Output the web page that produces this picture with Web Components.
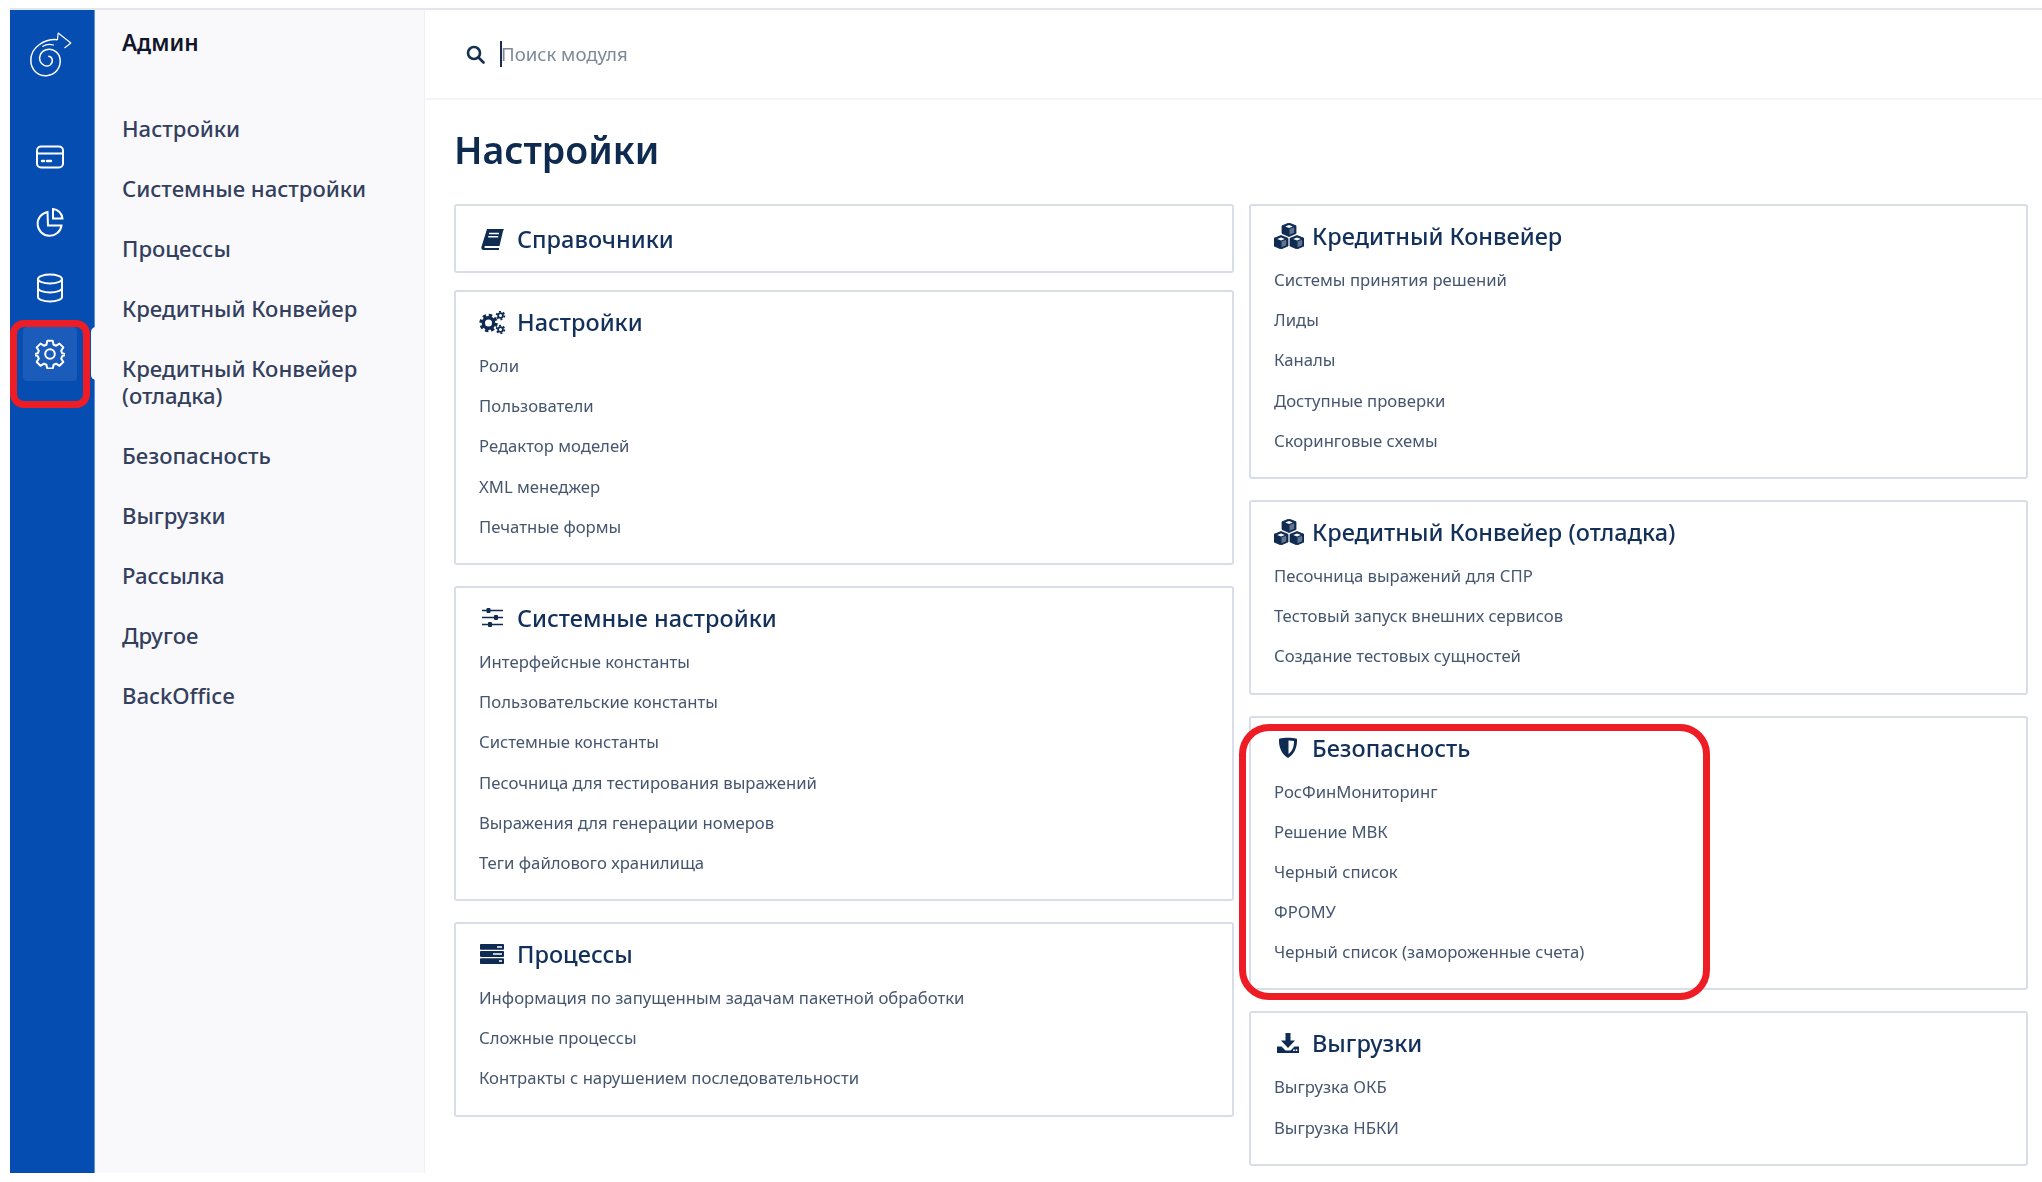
<!DOCTYPE html>
<html lang="ru">
<head>
<meta charset="utf-8">
<title>Настройки</title>
<style>
  html, body { margin: 0; padding: 0; background: #fff; }
  body { font-family: "Noto Sans", "Liberation Sans", sans-serif; }
</style>
</head>
<body>
<app-shell>
  <rail-nav slot="rail">
    <rail-icon name="card"></rail-icon>
    <rail-icon name="pie"></rail-icon>
    <rail-icon name="db"></rail-icon>
    <rail-icon name="gear" active></rail-icon>
  </rail-nav>
  <sub-menu slot="menu" heading="Админ">
    <sub-item>Настройки</sub-item>
    <sub-item>Системные настройки</sub-item>
    <sub-item>Процессы</sub-item>
    <sub-item>Кредитный Конвейер</sub-item>
    <sub-item>Кредитный Конвейер (отладка)</sub-item>
    <sub-item>Безопасность</sub-item>
    <sub-item>Выгрузки</sub-item>
    <sub-item>Рассылка</sub-item>
    <sub-item>Другое</sub-item>
    <sub-item>BackOffice</sub-item>
  </sub-menu>
  <search-bar slot="search" placeholder="Поиск модуля"></search-bar>
  <settings-page slot="page" heading="Настройки">
    <module-card slot="left" heading="Справочники" icon="book" compact></module-card>
    <module-card slot="left" heading="Настройки" icon="cogs">
      <module-link>Роли</module-link>
      <module-link>Пользователи</module-link>
      <module-link>Редактор моделей</module-link>
      <module-link>XML менеджер</module-link>
      <module-link>Печатные формы</module-link>
    </module-card>
    <module-card slot="left" heading="Системные настройки" icon="sliders">
      <module-link>Интерфейсные константы</module-link>
      <module-link>Пользовательские константы</module-link>
      <module-link>Системные константы</module-link>
      <module-link>Песочница для тестирования выражений</module-link>
      <module-link>Выражения для генерации номеров</module-link>
      <module-link>Теги файлового хранилища</module-link>
    </module-card>
    <module-card slot="left" heading="Процессы" icon="server">
      <module-link>Информация по запущенным задачам пакетной обработки</module-link>
      <module-link>Сложные процессы</module-link>
      <module-link>Контракты с нарушением последовательности</module-link>
    </module-card>

    <module-card slot="right" heading="Кредитный Конвейер" icon="cubes">
      <module-link>Системы принятия решений</module-link>
      <module-link>Лиды</module-link>
      <module-link>Каналы</module-link>
      <module-link>Доступные проверки</module-link>
      <module-link>Скоринговые схемы</module-link>
    </module-card>
    <module-card slot="right" heading="Кредитный Конвейер (отладка)" icon="cubes">
      <module-link>Песочница выражений для СПР</module-link>
      <module-link>Тестовый запуск внешних сервисов</module-link>
      <module-link>Создание тестовых сущностей</module-link>
    </module-card>
    <module-card slot="right" heading="Безопасность" icon="shield">
      <module-link>РосФинМониторинг</module-link>
      <module-link>Решение МВК</module-link>
      <module-link>Черный список</module-link>
      <module-link>ФРОМУ</module-link>
      <module-link>Черный список (замороженные счета)</module-link>
    </module-card>
    <module-card slot="right" heading="Выгрузки" icon="download">
      <module-link>Выгрузка ОКБ</module-link>
      <module-link>Выгрузка НБКИ</module-link>
    </module-card>
  </settings-page>
  <red-frame style="left:10px;top:320px;width:80px;height:88px" radius="14"></red-frame>
  <red-frame style="left:1239px;top:724px;width:471px;height:276px" radius="30"></red-frame>
</app-shell>

<script>
// Иконки бокового меню (контурные) и карточек (заливка)
const RAIL_ICONS = {
  card: `<rect x="2" y="4.5" width="26" height="21" rx="4"/><path d="M2 11.5h26"/><path d="M7 19h2M12 19h4" stroke-width="2.4"/>`,
  pie: `<g transform="translate(0 -1.500)"><path d="M12.5 5.5A12 12 0 1 0 26.5 19H13z" /><path d="M18 2.5c5 .4 9 4.300 9.500 9.500H18z"/></g>`,
  db: `<ellipse cx="15" cy="6" rx="12" ry="4.500"/><path d="M3 6v18c0 2.500 5.400 4.500 12 4.500s12-2 12-4.500V6"/><path d="M3 15c0 2.500 5.400 4.500 12 4.500s12-2 12-4.500"/>`,
  gear: `<path d="M12.300 1.800h5.400l.9 3.900 2.500 1 3.400-2.100 3.800 3.800-2.100 3.400 1 2.500 3.900.9v.6l-3.900 1.300-1 2.500 2.100 3.400-3.800 3.800-3.400-2.100-2.500 1-.9 3.900h-5.400l-.9-3.900-2.500-1-3.400 2.100-3.800-3.800 2.100-3.400-1-2.500-3.900-1.300v-.6l3.900-.9 1-2.500-2.100-3.400 3.800-3.800 3.400 2.100 2.500-1z" stroke-linejoin="round"/><circle cx="15" cy="15" r="4.800"/>`
};

const CUBE = (x, y) => `<g transform="translate(${x} ${y})">
  <path d="M7 0l7 2.800v7.700L7 13.500 0 10.500V2.800z" stroke="#0f2b52" stroke-width=".8" stroke-linejoin="round"/>
  <path d="M7 2l3.800 1.400L7 4.900 3.200 3.400z" fill="#fff"/>
  <path d="M7.500 6v5.700l4.700-2V4.200z" fill="#fff" opacity=".35"/>
</g>`;

const CARD_ICONS = {
  book: { w: 23, h: 21, pad: 2, svg: `<path d="M6 0h17l-1 2-3.500 15H4.500c-1.500 0-1.500 2 0 2H18v2H2.500C.8 21 0 19.500.4 18z"/><path d="M8 4.500h10M7.200 7.800h10" stroke="#fff" stroke-width="1.600"/>` },
  cogs: { w: 27, h: 23, pad: 0, svg: `
    <g fill="none" stroke="#0f2b52"><circle cx="9.500" cy="12" r="5.200" stroke-width="3.400"/><circle cx="9.500" cy="12" r="7.700" stroke-width="3" stroke-dasharray="3.400 2.650"/>
    <circle cx="21.500" cy="4.500" r="2.400" stroke-width="1.800"/><circle cx="21.500" cy="4.500" r="3.900" stroke-width="1.700" stroke-dasharray="2 2.100"/>
    <circle cx="21.500" cy="18.500" r="2.400" stroke-width="1.800"/><circle cx="21.500" cy="18.500" r="3.900" stroke-width="1.700" stroke-dasharray="2 2.100"/></g>` },
  sliders: { w: 21, h: 19, pad: 3, svg: `<path d="M0 2.500h21M0 9.500h21M0 16.500h21" stroke="#0f2b52" stroke-width="1.700"/><rect x="4.500" y="0" width="4" height="5" rx="1"/><rect x="12" y="7" width="4" height="5" rx="1"/><rect x="6" y="14" width="4" height="5" rx="1"/>` },
  server: { w: 24, h: 20, pad: 1, svg: `<rect width="24" height="5.800" rx=".8"/><rect y="7.100" width="24" height="5.800" rx=".8"/><rect y="14.200" width="24" height="5.800" rx=".8"/><path d="M17 2.900h5M13 10h9M19 17.100h3" stroke="#fff" stroke-width="1.500"/>` },
  cubes: { w: 30, h: 26, pad: 0, svg: CUBE(8, 0) + CUBE(0, 12.500) + CUBE(16, 12.500) },
  shield: { w: 18, h: 21, pad: 5, svg: `<path d="M1 1.500C4 .5 14 .5 17 1.500 18.500 2 18 3 18 4 18 12 14 18 9 21 4 18 0 12 0 4 0 3-.5 2 1 1.500z"/><path d="M9.500 3.500c2 0 4 .2 5.500.5 0 5.500-1.500 10-5.500 13z" fill="#fff"/>` },
  download: { w: 22, h: 20, pad: 3, svg: `<path d="M8.500 0h5v7.500H18l-7 7.500-7-7.500h4.500z"/><path d="M0 13.500h4.500l4 4h5l4-4H22V20H0z"/><circle cx="17" cy="17.200" r=".9" fill="#fff"/><circle cx="19.500" cy="17.200" r=".9" fill="#fff"/>` }
};

class AppShell extends HTMLElement {
  constructor() {
    super();
    this.attachShadow({ mode: 'open' }).innerHTML = `
    <style>
      :host {
        display: grid;
        position: relative;
        grid-template-columns: 85px 330px 1fr;
        grid-template-rows: 90px 1fr;
        margin: 8px 0 0 10px;
        height: 1165px;
        border-top: 2px solid #e4e6ee;
        box-sizing: border-box;
        overflow: hidden;
        filter: blur(.4px);
      }
      ::slotted([slot=rail]) { grid-row: 1 / 3; }
      ::slotted([slot=menu]) { grid-row: 1 / 3; }
    </style>
    <slot name="rail"></slot>
    <slot name="menu"></slot>
    <slot name="search"></slot>
    <slot name="page"></slot>
    <slot></slot>`;
  }
}

class RailNav extends HTMLElement {
  constructor() {
    super();
    this.attachShadow({ mode: 'open' }).innerHTML = `
    <style>
      :host {
        display: flex;
        flex-direction: column;
        background: #054db0;
        border-right: 1px solid #5a90e0;
        padding: 22px 0 0 13px;
        box-sizing: border-box;
      }
      .logo { display: block; margin: 0 0 53px 7px; }
      .list { display: flex; flex-direction: column; gap: 11.500px; }
    </style>
    <svg class="logo" width="42" height="45" viewBox="90 97 125 135" fill="none" stroke="#fff" stroke-width="4.500" stroke-linecap="round" stroke-linejoin="round">
      <path d="M170 120C135 118 92 140 92 182 92 212 115 230 140 228 165 226 182 205 180 180 178 158 158 145 138 150 122 154 115 170 120 185 125 198 140 203 150 196 160 188 158 172 146 170"/>
      <path d="M172 119L174 100 212 130 194 144" stroke-width="3.500"/>
      <path d="M128 140C138 133 150 133 160 136" stroke-width="3.500"/>
    </svg>
    <div class="list"><slot></slot></div>`;
  }
}

class RailIcon extends HTMLElement {
  constructor() {
    super();
    this.attachShadow({ mode: 'open' }).innerHTML = `
    <style>
      :host {
        display: flex;
        position: relative;
        align-items: center;
        justify-content: center;
        width: 54px;
        height: 54px;
        border-radius: 4px;
      }
      :host([active]) { background: #1b5cba; }
      svg { display: block; }
      .notch {
        display: none;
        position: absolute;
        left: 68px;
        top: 0;
        width: 5px;
        height: 53px;
        background: #f9f9fc;
        border-radius: 6px 0 0 6px;
      }
      :host([active]) .notch { display: block; }
    </style>
    <svg width="30" height="30" viewBox="0 0 30 30" fill="none" stroke="#fff" stroke-width="2" stroke-linecap="round">${RAIL_ICONS[this.getAttribute('name')]}</svg>
    <span class="notch"></span>`;
  }
}

class SubMenu extends HTMLElement {
  constructor() {
    super();
    this.attachShadow({ mode: 'open' }).innerHTML = `
    <style>
      :host {
        display: block;
        background: #f9f9fc;
        border-right: 1px solid #eef0f4;
        padding: 18px 24px 0 27px;
        box-sizing: border-box;
        font-family: "Noto Sans", "Liberation Sans", sans-serif;
      }
      h2 {
        margin: 0 0 57px;
        font-size: 22.500px;
        line-height: 30px;
        font-weight: 600;
        color: #12162a;
      }
      .list { display: flex; flex-direction: column; gap: 33px; }
    </style>
    <h2>${this.getAttribute('heading')}</h2>
    <div class="list"><slot></slot></div>`;
  }
}

class SubItem extends HTMLElement {
  constructor() {
    super();
    this.attachShadow({ mode: 'open' }).innerHTML = `
    <style>
      :host {
        display: block;
        font-size: 22.100px;
        line-height: 27px;
        font-weight: 500;
        color: #333f5c;
      }
    </style>
    <slot></slot>`;
  }
}

class SearchBar extends HTMLElement {
  constructor() {
    super();
    this.attachShadow({ mode: 'open' }).innerHTML = `
    <style>
      :host {
        display: flex;
        align-items: center;
        height: 90px;
        padding-left: 41px;
        box-sizing: border-box;
        border-bottom: 2px solid #f3f4f7;
        font-family: "Noto Sans", "Liberation Sans", sans-serif;
      }
      svg { display: block; flex: none; margin-right: 15px; }
      .caret { width: 2px; height: 26px; background: #1c2c4c; flex: none; }
      .placeholder { font-size: 18.600px; color: #7c8999; margin-left: -1px; padding-bottom: 2px; }
    </style>
    <svg width="19" height="19" viewBox="0 0 19 19" fill="none" stroke="#14304f" stroke-width="2.600"><circle cx="8" cy="8" r="6"/><path d="M12.500 12.500l5 5" stroke-linecap="round"/></svg>
    <span class="caret"></span>
    <span class="placeholder">${this.getAttribute('placeholder')}</span>`;
  }
}

class SettingsPage extends HTMLElement {
  constructor() {
    super();
    this.attachShadow({ mode: 'open' }).innerHTML = `
    <style>
      :host {
        display: block;
        padding: 22px 15px 0 29px;
        font-family: "Noto Sans", "Liberation Sans", sans-serif;
      }
      h1 {
        margin: 0 0 26px;
        font-size: 37.500px;
        line-height: 56px;
        font-weight: 600;
        color: #0e2a4f;
      }
      .cols { display: grid; grid-template-columns: 780px 779px; column-gap: 15px; align-items: start; }
      .col { display: flex; flex-direction: column; gap: 21px; }
    </style>
    <h1>${this.getAttribute('heading')}</h1>
    <div class="cols">
      <div class="col"><slot name="left"></slot></div>
      <div class="col"><slot name="right"></slot></div>
    </div>`;
  }
}

class ModuleCard extends HTMLElement {
  constructor() {
    super();
    const icon = CARD_ICONS[this.getAttribute('icon')];
    this.attachShadow({ mode: 'open' }).innerHTML = `
    <style>
      :host {
        display: block;
        border: 2px solid #d8dde8;
        border-radius: 3px;
        background: #fff;
        padding: 10px 23px 16px;
        box-sizing: border-box;
      }
      :host([compact]) { padding-top: 13px; padding-bottom: 12px; margin-bottom: -4px; }
      .head { display: flex; align-items: center; height: 40px; margin-bottom: 4px; }
      :host([compact]) .head { margin-bottom: 0; }
      .ico { width: ${38 - icon.pad}px; padding-left: ${icon.pad}px; flex: none; }
      svg { display: block; fill: #0f2b52; }
      .title { font-size: 23.500px; line-height: 40px; font-weight: 500; color: #12305a; }
    </style>
    <div class="head">
      <span class="ico"><svg width="${icon.w}" height="${icon.h}" viewBox="0 0 ${icon.w} ${icon.h}">${icon.svg}</svg></span>
      <span class="title">${this.getAttribute('heading')}</span>
    </div>
    <slot></slot>`;
  }
}

class ModuleLink extends HTMLElement {
  constructor() {
    super();
    this.attachShadow({ mode: 'open' }).innerHTML = `
    <style>
      :host {
        display: block;
        height: 40.200px;
        font-size: 16.700px;
        line-height: 40px;
        color: #45566e;
      }
    </style>
    <slot></slot>`;
  }
}

// Красная рамка-пометка поверх скриншота
class RedFrame extends HTMLElement {
  constructor() {
    super();
    this.attachShadow({ mode: 'open' }).innerHTML = `
    <style>
      :host {
        display: block;
        position: absolute;
        box-sizing: border-box;
        margin: -10px 0 0 -10px;
        border: 7px solid #ee1c25;
        border-radius: ${this.getAttribute('radius')}px;
        pointer-events: none;
      }
    </style>`;
  }
}

customElements.define('app-shell', AppShell);
customElements.define('rail-nav', RailNav);
customElements.define('rail-icon', RailIcon);
customElements.define('sub-menu', SubMenu);
customElements.define('sub-item', SubItem);
customElements.define('search-bar', SearchBar);
customElements.define('settings-page', SettingsPage);
customElements.define('module-card', ModuleCard);
customElements.define('module-link', ModuleLink);
customElements.define('red-frame', RedFrame);
</script>
</body>
</html>
